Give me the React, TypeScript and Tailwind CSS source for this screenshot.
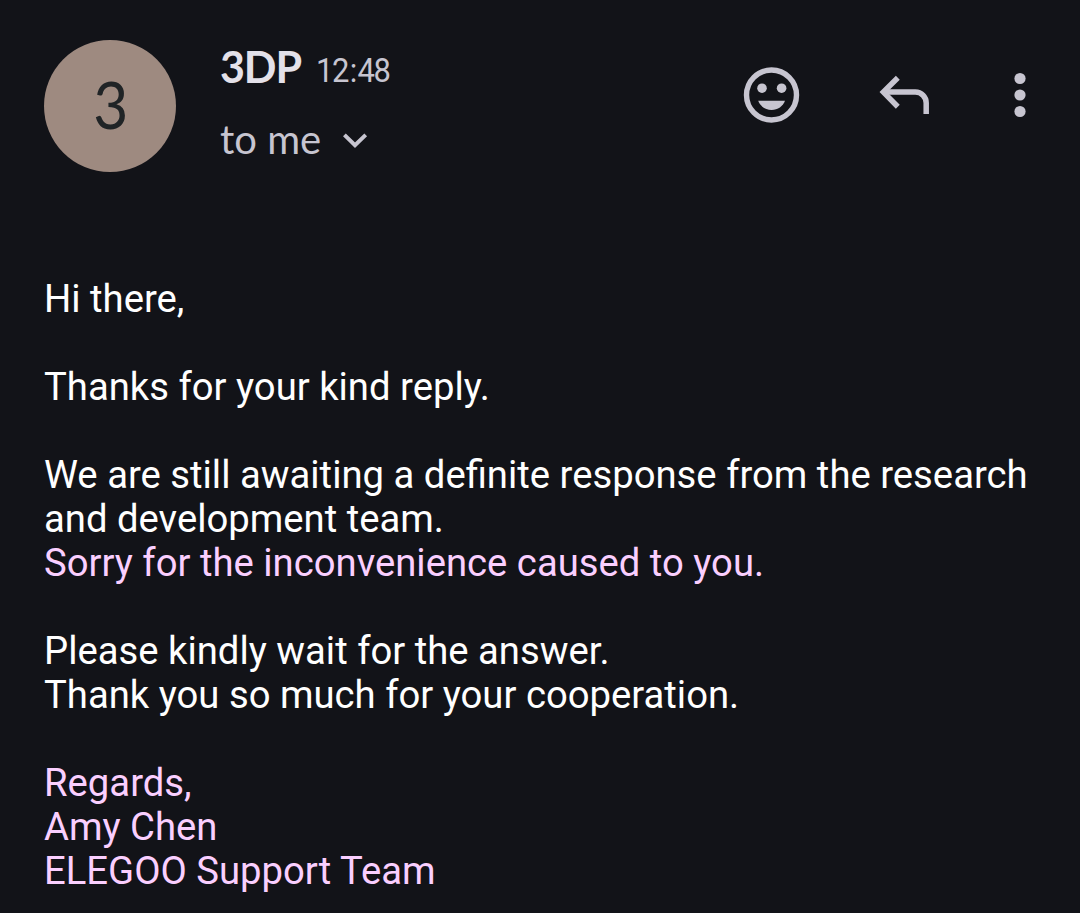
import React from "react";

function Avatar() {
  return (
    <div className="flex h-[132px] w-[132px] shrink-0 items-center justify-center rounded-full bg-[#9e8a80] pb-[4px] pl-px font-[Lato,sans-serif] text-[65px] leading-none text-[#202426]">
      <span className="inline-block scale-x-[.93]">3</span>
    </div>
  );
}

function SmileIcon() {
  return (
    <svg className="h-[56px] w-[57px]" viewBox="743 67 57 56" fill="#c7c5d0">
      <circle cx="771.5" cy="95" r="25" fill="none" stroke="#c7c5d0" strokeWidth="5.4" />
      <circle cx="762" cy="88.2" r="4.8" />
      <circle cx="781.6" cy="88.2" r="4.8" />
      <path d="M758.2 100.8H785C783 106.4 777.8 109.9 771.6 109.9S760.2 106.4 758.2 100.8Z" />
    </svg>
  );
}

function ReplyIcon() {
  return (
    <svg className="h-[56px] w-[52px]" viewBox="879 67 52 56" fill="none" stroke="#c7c5d0" strokeWidth="5.5">
      <path d="M897.8 77.8L883.4 92.1L897.8 106.7" />
      <path d="M884 92H915.3A10.9 10.9 0 0 1 926.2 102.9V114" />
    </svg>
  );
}

function MoreIcon() {
  return (
    <svg className="h-[56px] w-[12px]" viewBox="1014 67 12 56" fill="#c7c5d0">
      <circle cx="1020" cy="78.5" r="5.6" />
      <circle cx="1020" cy="95" r="5.6" />
      <circle cx="1020" cy="111.5" r="5.6" />
    </svg>
  );
}

function Chevron() {
  return (
    <svg className="mt-[2px] h-[16px] w-[26px]" viewBox="342 132 26 16" fill="none" stroke="#c7c5d0" strokeWidth="3.9">
      <path d="M344.4 134.8L355 145.2L365.7 134.8" />
    </svg>
  );
}

export default function App() {
  return (
    <main className="h-[913px] w-[1080px] overflow-hidden bg-[#121318] px-[44px] pt-[40px]">
      <header className="flex h-[132px]">
        <Avatar />
        <div className="-mt-px ml-[44px] flex w-[200px] flex-col font-[Lato,sans-serif] whitespace-nowrap">
          <div className="flex h-[56px] items-baseline">
            <span className="w-[96px] text-[43px] leading-[56px] font-bold tracking-[-1.1px] text-[#e4e1e9]">3DP</span>
            <span className="origin-left -translate-y-px scale-x-[.91] font-[Roboto,sans-serif] text-[34px] leading-[56px] tracking-[-1.6px] text-[#c7c5d0]">
              12<span className="mr-[2px] ml-[2px]">:</span>48
            </span>
          </div>
          <div className="mt-[16px] flex h-[56px] items-center gap-[21px]">
            <span className="text-[40px] leading-[56px] text-[#c7c5d0]">to me</span>
            <Chevron />
          </div>
        </div>
        <div className="mt-[27px] mr-[-34px] ml-auto flex h-[56px] w-[327px]">
          <SmileIcon />
          <div className="ml-[79px]">
            <ReplyIcon />
          </div>
          <div className="ml-[83px]">
            <MoreIcon />
          </div>
        </div>
      </header>
      <article className="mt-[105px] font-[Roboto,sans-serif] text-[38.26px] leading-[44px] whitespace-nowrap text-white">
        <p>Hi there,</p>
        <p className="mt-[44px]">Thanks for your kind reply.</p>
        <p className="mt-[44px]">
          We are still awaiting a definite response from the research
          <br />
          and development team.
        </p>
        <p className="text-[#facfff]">Sorry for the inconvenience caused to you.</p>
        <p className="mt-[44px]">
          Please kindly wait for the answer.
          <br />
          Thank you so much for your cooperation.
        </p>
        <p className="mt-[44px] text-[#facfff]">
          Regards,
          <br />
          Amy Chen
          <br />
          ELEGOO Support Team
        </p>
      </article>
    </main>
  );
}
